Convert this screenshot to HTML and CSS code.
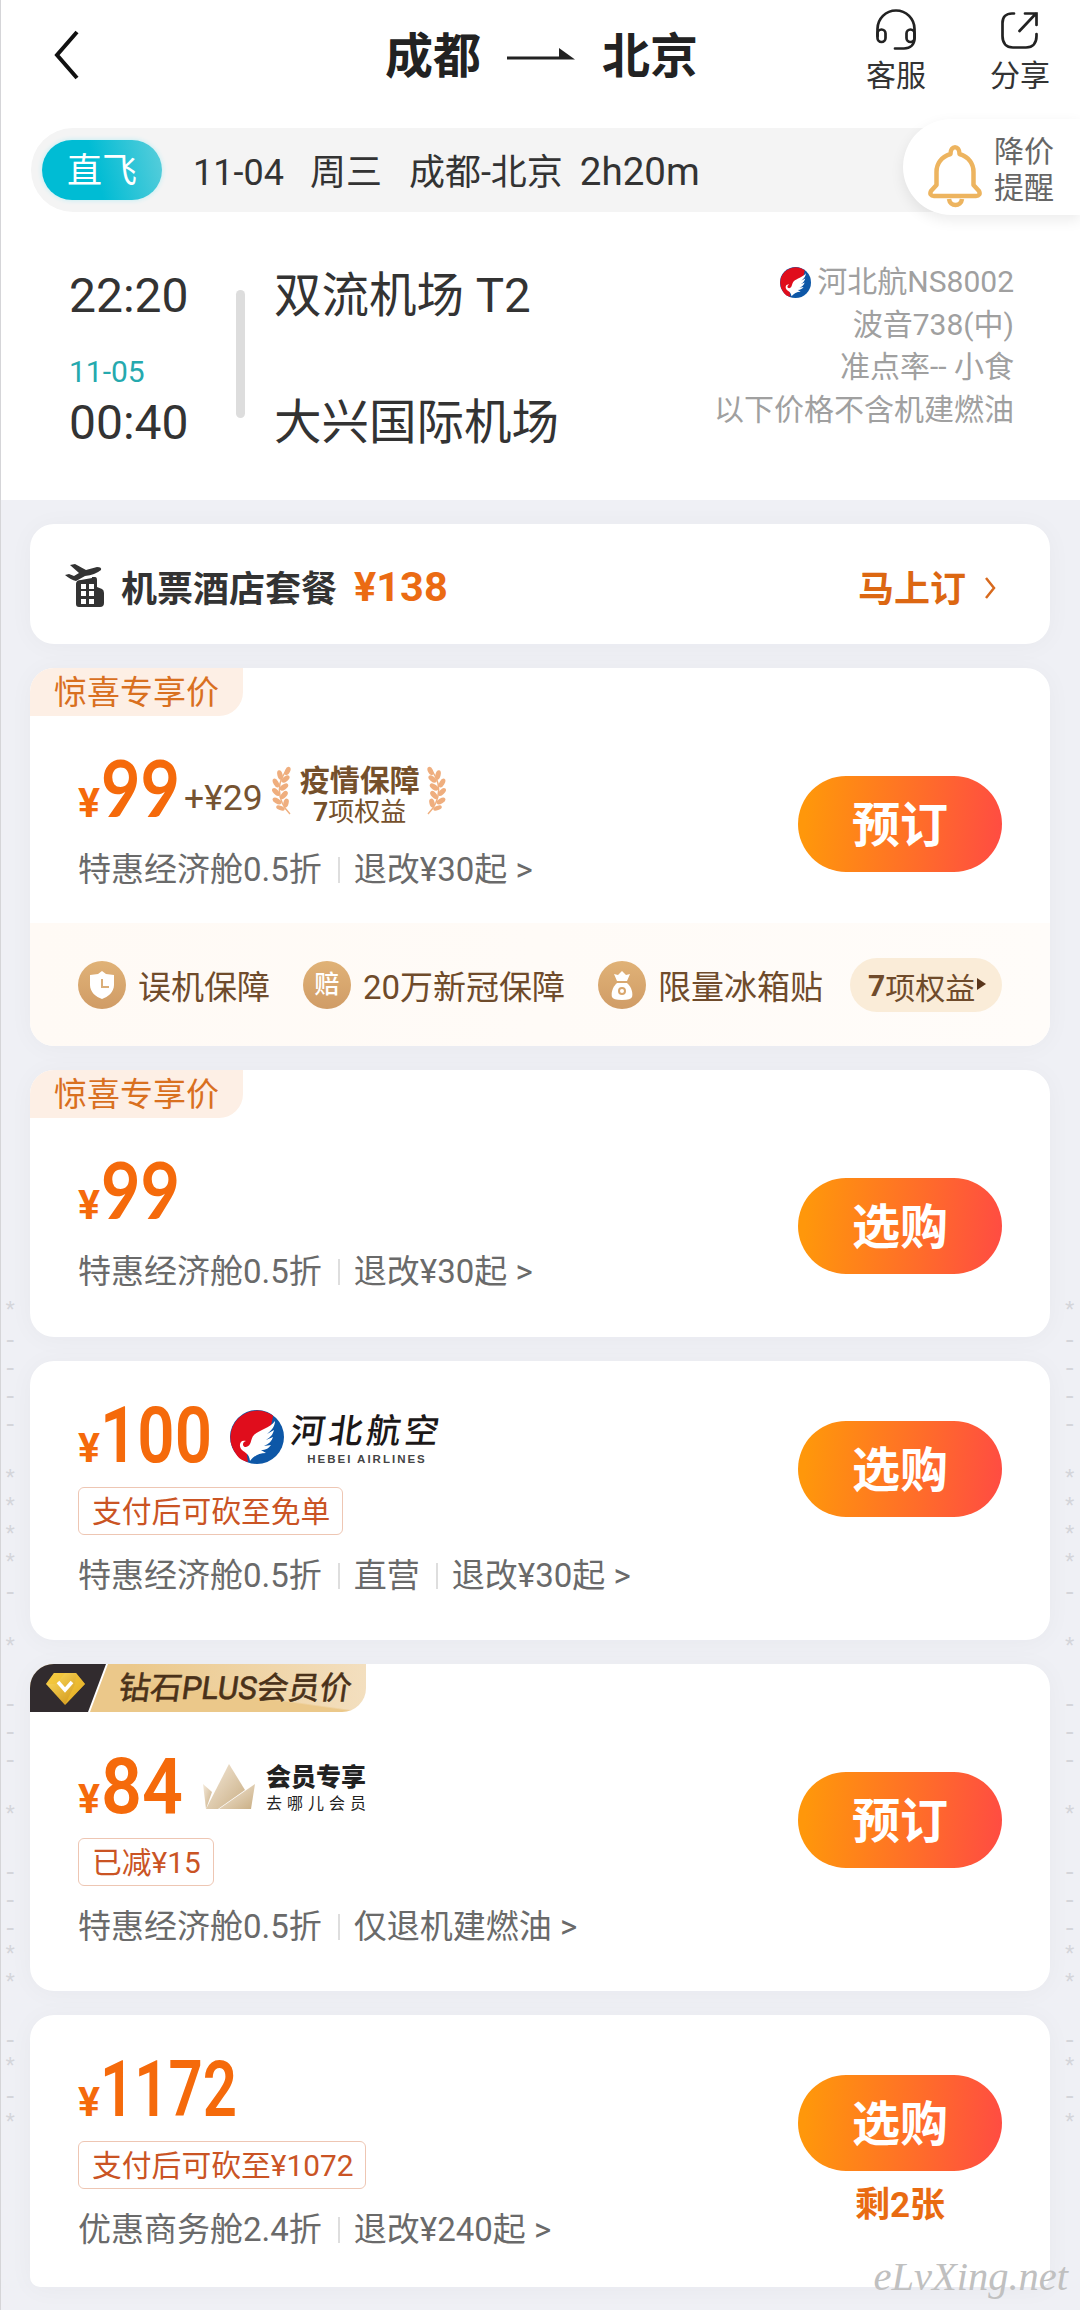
FILE: index.html
```html
<!DOCTYPE html>
<html lang="zh-CN">
<head>
<meta charset="utf-8">
<title>成都 - 北京</title>
<link rel="stylesheet" href="styles.css">
</head>
<body>
<svg width="0" height="0" class="defs">
  <defs>
    <linearGradient id="gold" x1="0" y1="0" x2="0" y2="1"><stop offset="0" stop-color="#e0b277"/><stop offset="1" stop-color="#d09c66"/></linearGradient>
    <linearGradient id="crown" x1="0" y1="0" x2="1" y2="1"><stop offset="0" stop-color="#f5eadb"/><stop offset="1" stop-color="#c9ae84"/></linearGradient>
    <linearGradient id="gem" x1="0" y1="0" x2="1" y2="1"><stop offset="0" stop-color="#ffe061"/><stop offset="1" stop-color="#c98a10"/></linearGradient>
    <symbol id="hebei" viewBox="0 0 54 54">
      <circle cx="27" cy="27" r="27" fill="#0d57a7"/>
      <path d="M43 5.500A27 27 0 0 0 6 44C9 49 13 51 18 52C17 47 16 43 19 38C22 34 27 33 31 29C38 23 42 16 43 5.500Z" fill="#e00d1c"/>
      <path d="M45 11C40 18 29 20 24 25C20 29 22 36 16 37C12 37 12 32 16 31C10 29 8 36 12 40C15 43 19 43 20 51C24 46 29 43 36 43L31 40C36 40 39 38 41 35L34 36C39 34 42 31 43 27L36 30C41 27 43 24 44 20L37 24C42 20 45 16 45 11Z" fill="#fff"/>
    </symbol>
    <symbol id="laurel" viewBox="0 0 20 50">
      <path d="M17 2C4 14 4 34 18 48" fill="none" stroke="#efb080" stroke-width="1.500"/>
      <g fill="#efae7e">
        <ellipse cx="15.500" cy="5" rx="2.600" ry="4.500" transform="rotate(25 15.500 5)"/>
        <ellipse cx="8" cy="9" rx="2.600" ry="4.800" transform="rotate(-15 8 9)"/>
        <ellipse cx="13.500" cy="13" rx="2.600" ry="4.800" transform="rotate(50 13.500 13)"/>
        <ellipse cx="4" cy="17" rx="2.600" ry="4.800" transform="rotate(-30 4 17)"/>
        <ellipse cx="12" cy="21" rx="2.600" ry="4.800" transform="rotate(55 12 21)"/>
        <ellipse cx="4" cy="26" rx="2.600" ry="4.800" transform="rotate(-45 4 26)"/>
        <ellipse cx="12" cy="29" rx="2.600" ry="4.800" transform="rotate(42 12 29)"/>
        <ellipse cx="5" cy="35" rx="2.600" ry="4.800" transform="rotate(-60 5 35)"/>
        <ellipse cx="14" cy="37" rx="2.600" ry="4.500" transform="rotate(15 14 37)"/>
        <ellipse cx="8.500" cy="42" rx="2.200" ry="4.500" transform="rotate(-70 8.500 42)"/>
      </g>
    </symbol>
  </defs>
</svg>

<main class="screen">
  <section class="top">
    <header class="nav">
      <svg class="back" viewBox="0 0 26 50"><path d="M24 2L4 25L24 48" fill="none" stroke="#111" stroke-width="4"/></svg>
      <h1 class="route"><span>成都</span><svg width="68" height="14" viewBox="0 0 68 14"><path d="M0 9.500H52V1L68 12.500H0Z" fill="#222"/></svg><span>北京</span></h1>
      <div class="actions">
        <div class="action"><svg width="42" height="42" viewBox="0 0 42 42" fill="none" stroke="#222" stroke-width="2.700" stroke-linecap="round"><path d="M2.500 27V20A18.500 18.500 0 0 1 39.500 20V29C39.500 36 35 39.500 29 39.500H20"/><rect x="2.500" y="20.500" width="8" height="12.500" rx="4"/><rect x="31.500" y="20.500" width="8" height="12.500" rx="4"/></svg><span>客服</span></div>
        <div class="action"><svg width="42" height="42" viewBox="0 0 42 42" fill="none" stroke="#222" stroke-width="2.700" stroke-linecap="round"><path d="M15 4.500H13C7 4.500 3.500 8 3.500 14V27C3.500 34 7 38.500 14 38.500H27C34 38.500 37.500 34 37.500 27V25M20.500 22L37 4.500M26 4.500H37.500V16"/></svg><span>分享</span></div>
      </div>
    </header>

    <div class="summary">
      <span class="direct">直飞</span>
      <div class="trip"><span class="s-date">11-04</span><span class="s-day">周三</span><span class="s-route">成都-北京</span><span class="s-time">2h20m</span></div>
      <div class="alert">
        <svg width="54" height="64" viewBox="0 0 54 64" fill="none" stroke="#edb45f" stroke-width="4.500" stroke-linejoin="round"><path d="M22.500 10C22.500 1 31.500 1 31.500 10C41 13 45.500 20 45.500 28V41L51 47C52.500 50 51 52 48 52H6C3 52 1.500 50 3 47L8.500 41V28C8.500 20 13 13 22.500 10Z"/><path d="M21 55C22 63 33 63 34 55"/></svg>
        <span>降价<br>提醒</span>
      </div>
    </div>

    <div class="flight">
      <div class="times"><b>22:20</b><i>11-05</i><b>00:40</b></div>
      <div class="bar"></div>
      <div class="ports"><span>双流机场 T2</span><span>大兴国际机场</span></div>
      <div class="info">
        <span class="carrier"><svg width="31" height="31"><use href="#hebei"/></svg>河北航NS8002</span>
        <span>波音738(中)</span><span>准点率-- 小食</span><span>以下价格不含机建燃油</span>
      </div>
    </div>
  </section>

  <section class="list">
    <div class="marks left">*<br>-<br>-<br>-<br>-<br><br>*<br>*<br>*<br>*<br>-<br><br>*<br><br>-<br>-<br>-<br><br>*<br><br>-<br>-<br>-<br>*<br>*<br><br>-<br>*<br>-<br>*</div>
    <div class="marks right">*<br>-<br>-<br>-<br>-<br><br>*<br>*<br>*<br>*<br>-<br><br>*<br><br>-<br>-<br>-<br><br>*<br><br>-<br>-<br>-<br>*<br>*<br><br>-<br>*<br>-<br>*</div>

    <article class="card combo">
      <svg width="40" height="43" viewBox="0 0 40 43"><g fill="#333"><path d="M5 1L10 0L21 6L32 3Q37 3 36 6Q30 11 20 12L11 17Q6 16 0 11L4 10L9 12L14 9Z"/><path d="M16 16L27 14V13H30Q32 13 32 16V23L37 25Q39 26 39 29V39Q39 43 35 43H14Q11 43 11 40V20Q11 16 16 16Z"/></g><g fill="#fff"><path d="M16 20h5v5h-5zM24 20h5v5h-5zM16 27h5v5h-5zM24 27h5v5h-5zM16 35h5v5h-5zM24 35h5v5h-5z"/></g></svg>
      <span class="combo-name">机票酒店套餐</span><span class="combo-price">¥138</span>
      <span class="combo-go">马上订</span>
      <svg class="combo-arrow" width="12" height="22" viewBox="0 0 12 22"><path d="M2 1L10 11L2 21" fill="none" stroke="#d86a1e" stroke-width="2.500"/></svg>
    </article>

    <article class="card c2">
      <div class="tag">惊喜专享价</div>
      <div class="fare">
        <div class="detail">
          <div class="price"><svg class="amount" width="104" height="68"><text class="yen" x="0" y="61" textLength="22" lengthAdjust="spacingAndGlyphs">¥</text><text class="num lato" x="23" y="61" textLength="79" lengthAdjust="spacingAndGlyphs">99</text></svg>
            <span class="plus">+¥29</span>
            <svg class="laurel" width="20" height="50"><use href="#laurel"/></svg>
            <span class="perk"><b>疫情保障</b><span><b>7</b>项权益</span></span>
            <svg class="laurel flip" width="20" height="50"><use href="#laurel"/></svg>
          </div>
          <div class="terms"><span>特惠经济舱0.5折</span><span>退改¥30起 &gt;</span></div>
        </div>
        <div class="buy"><button>预订</button></div>
      </div>
      <div class="benefits">
        <span class="benefit"><svg width="48" height="48" viewBox="0 0 48 48"><circle cx="24" cy="24" r="24" fill="url(#gold)"/><path d="M24 10L28 13L36 14V24C36 31 30 36 24 38C18 36 12 31 12 24V14L20 13Z" fill="#fff"/><path d="M24 18V26H31" fill="none" stroke="#dbae78" stroke-width="2"/></svg>误机保障</span>
        <span class="benefit"><span class="coin">赔</span>20万新冠保障</span>
        <span class="benefit"><svg width="48" height="48" viewBox="0 0 48 48"><circle cx="24" cy="24" r="24" fill="url(#gold)"/><path d="M16 13L20 14L24 10L28 14L32 13L29 20H19Z" fill="#fff"/><path d="M19 22H29C34 26 35 33 34 36Q33 39 24 39Q15 39 14 36C13 33 14 26 19 22Z" fill="#fff"/><circle cx="24" cy="30" r="3" fill="none" stroke="#d8a66d" stroke-width="2"/></svg>限量冰箱贴</span>
        <span class="more"><b>7</b>项权益<i></i></span>
      </div>
    </article>

    <article class="card c3">
      <div class="tag">惊喜专享价</div>
      <div class="fare">
        <div class="detail">
          <div class="price"><svg class="amount" width="104" height="68"><text class="yen" x="0" y="61" textLength="22" lengthAdjust="spacingAndGlyphs">¥</text><text class="num lato" x="23" y="61" textLength="79" lengthAdjust="spacingAndGlyphs">99</text></svg></div>
          <div class="terms"><span>特惠经济舱0.5折</span><span>退改¥30起 &gt;</span></div>
        </div>
        <div class="buy"><button>选购</button></div>
      </div>
    </article>

    <article class="card c4">
      <div class="fare">
        <div class="detail">
          <div class="price"><svg class="amount" width="134" height="68"><text class="yen" x="0" y="61" textLength="22" lengthAdjust="spacingAndGlyphs">¥</text><text class="num" x="22" y="61" textLength="112" lengthAdjust="spacingAndGlyphs">100</text></svg>
            <svg class="airline" width="54" height="54"><use href="#hebei"/></svg>
            <span class="brand"><span class="brand-cn">河北航空</span><span class="brand-en">HEBEI AIRLINES</span></span>
          </div>
          <div class="promo">支付后可砍至免单</div>
          <div class="terms"><span>特惠经济舱0.5折</span><span>直营</span><span>退改¥30起 &gt;</span></div>
        </div>
        <div class="buy"><button>选购</button></div>
      </div>
    </article>

    <article class="card c5">
      <div class="plus-tag">
        <svg width="70" height="48" viewBox="0 0 70 48"><path d="M0 0H76L58 48H0Z" fill="#312b2e"/><path d="M24 9H46L55 20L35 41L16 20Z" fill="url(#gem)"/><path d="M24 9L16 20H26L35 9ZM46 9L55 20L35 41L45 20Z" fill="#f2c230" opacity=".6"/><path d="M28 18L35 26L42 18" fill="none" stroke="#fff" stroke-width="3.500"/></svg>
        <span>钻石PLUS会员价</span>
      </div>
      <div class="fare">
        <div class="detail">
          <div class="price"><svg class="amount" width="109" height="68"><text class="yen" x="0" y="61" textLength="22" lengthAdjust="spacingAndGlyphs">¥</text><text class="num" x="23" y="61" textLength="82" lengthAdjust="spacingAndGlyphs">84</text></svg>
            <svg class="crown" width="52" height="46" viewBox="0 0 52 46"><g fill="url(#crown)"><path d="M0 20L9 28L3 45Z"/><path d="M26 0L42 26L15 45H3Z"/><path d="M52 20L48 45H16Z"/></g></svg>
            <span class="member"><b>会员专享</b><span>去哪儿会员</span></span>
          </div>
          <div class="promo">已减¥15</div>
          <div class="terms"><span>特惠经济舱0.5折</span><span>仅退机建燃油 &gt;</span></div>
        </div>
        <div class="buy"><button>预订</button></div>
      </div>
    </article>

    <article class="card c6">
      <div class="fare">
        <div class="detail">
          <div class="price"><svg class="amount" width="162" height="68"><text class="yen" x="0" y="61" textLength="22" lengthAdjust="spacingAndGlyphs">¥</text><text class="num" x="22" y="61" textLength="137" lengthAdjust="spacingAndGlyphs">1172</text></svg></div>
          <div class="promo">支付后可砍至¥1072</div>
          <div class="terms"><span>优惠商务舱2.4折</span><span>退改¥240起 &gt;</span></div>
        </div>
        <div class="buy"><button>选购</button><span class="left-count">剩2张</span></div>
      </div>
    </article>
    <div class="watermark">eLvXing.net</div>
  </section>
</main>
</body>
</html>
```

FILE: styles.css
```css
* { box-sizing: border-box; }
body { margin: 0; background: #eff0f5; color: #333; font-family: Roboto, "Noto Sans CJK SC", sans-serif; }
svg { flex: none; display: block; }
.defs { position: absolute; }
.screen { width: 1080px; height: 2310px; overflow: hidden; border-left: 1px solid #d5d5d8; white-space: nowrap; }
.top { height: 500px; background: #fff; }

.nav { height: 128px; display: flex; align-items: flex-start; padding-left: 52px; }
.back { width: 26px; height: 50px; margin-top: 30px; }
.route { margin: 24px 0 0 306px; height: 66px; line-height: 66px; display: flex; align-items: center; font-size: 48px; font-weight: 700; color: #222; }
.route svg { margin: -6px 27px 0 26px; }
.actions { margin-left: auto; display: flex; gap: 64px; padding: 9px 30px 0 0; }
.action { width: 60px; display: flex; flex-direction: column; align-items: center; font-size: 30px; line-height: 40px; color: #333; }
.action span { margin-top: 5px; }

.summary { height: 84px; margin-left: 30px; padding-left: 11px; display: flex; align-items: center; position: relative; background: #f4f4f4; border-radius: 42px 0 0 42px; font-size: 36px; }
.direct { width: 120px; height: 60px; line-height: 63px; border-radius: 30px; background: linear-gradient(75deg, #00bcd4 45%, #5bcedb); color: #fff; text-align: center; font-size: 35px; margin-right: 31px; box-shadow: 0 0 5px #b8edf4; }
.trip { display: flex; align-items: baseline; line-height: 50px; padding-top: 5px; }
.s-date { margin-right: 26px; }
.s-day { margin-right: 27px; }
.s-route { margin-right: 17px; }
.s-time { font-size: 38.500px; }
.alert { position: absolute; right: 0; top: -9px; width: 177px; height: 96px; padding-left: 25px; display: flex; align-items: center; gap: 12px; background: #fff; border-radius: 48px 0 0 48px; box-shadow: 0 5px 14px rgba(0,0,0,.08); color: #666; font-size: 30px; line-height: 36px; }
.alert svg { margin-top: 18px; }
.alert span { margin-top: 6px; }

.flight { display: flex; padding: 51px 66px 0 68px; }
.times { width: 167px; display: flex; flex-direction: column; }
.times b { font-weight: 400; font-size: 48px; line-height: 66px; }
.times i { font-style: normal; font-size: 30px; line-height: 40px; color: #25a9ae; margin: 23px 0 -2px; }
.bar { width: 9px; height: 128px; margin-top: 27px; border-radius: 5px; background: #ddd; }
.ports { margin-left: 29px; font-size: 47.500px; line-height: 66px; display: flex; flex-direction: column; gap: 61px; }
.info { margin-left: auto; margin-top: -2px; display: flex; flex-direction: column; align-items: flex-end; color: #a0a0a0; font-size: 30px; line-height: 42.500px; }
.carrier { display: flex; align-items: center; gap: 6px; }

.list { position: relative; padding: 24px 30px 0 29px; display: flex; flex-direction: column; gap: 24px; }
.marks { position: absolute; top: 799px; font: 24px/28px "Liberation Mono", monospace; color: #d4d5da; }
.marks.left { left: 2px; }
.marks.right { right: 3px; }
.card { position: relative; background: #fff; border-radius: 24px; box-shadow: 0 2px 26px rgba(40,40,60,.035); overflow: hidden; }
.combo { height: 120px; display: flex; align-items: center; padding: 3px 54px 0 35px; }
.combo-name { margin-left: 16px; font-size: 36px; font-weight: 700; }
.combo-price { margin: 1px 0 0 17px; font-size: 41.500px; font-weight: 700; color: #eb6b13; }
.combo-go { margin: 0 18px 0 auto; font-size: 36px; font-weight: 700; color: #dc6712; }
.combo-arrow { margin-top: 5px; }
.c2 { height: 378px; }
.c3 { height: 267px; }
.c4 { height: 279px; }
.c5 { height: 327px; }
.c6 { height: 272px; border-radius: 24px 24px 10px 10px; }

.tag { width: 213px; height: 48px; line-height: 50px; padding-left: 24px; font-size: 33px; color: #d9701f; background: #fdefe5; border-radius: 0 0 24px 0; }
.fare { display: flex; justify-content: space-between; padding: 40px 48px 0 48px; }
.c2 .fare { height: 207px; }
.price { height: 68px; display: flex; align-items: flex-start; }
.amount { overflow: visible; fill: #f56a0b; font-weight: 700; }
.yen { font-size: 41px; }
.num { font-size: 78px; font-weight: 600; }
.num.lato { font-family: Lato, Roboto, sans-serif; font-weight: 700; }
.plus { margin: 14px 9px 0 2px; font-size: 35.500px; line-height: 56px; color: #765331; }
.laurel { margin-top: 10px; }
.flip { transform: scaleX(-1); }
.perk { margin: 7px 6px 0 8px; width: 120px; display: flex; flex-direction: column; align-items: center; color: #75502b; font-size: 26px; line-height: 26px; }
.perk > b { font-size: 30px; line-height: 36px; }
.terms { height: 40px; margin-top: 26px; line-height: 42px; font-size: 33px; color: #6a6a6a; display: flex; align-items: center; }
.terms span + span::before { content: ""; display: inline-block; width: 2px; height: 26px; background: #dedede; margin: 0 14px 0 16px; vertical-align: -2px; }
.promo { width: max-content; height: 48px; margin-top: 18px; padding: 0 12px 0 13px; line-height: 48px; border: 1px solid #eec6b3; border-radius: 6px; font-size: 29.800px; color: #ca5424; }
.promo + .terms { margin-top: 21px; }
.buy { width: 204px; padding-top: 20px; display: flex; flex-direction: column; align-items: center; }
.buy button { width: 204px; height: 96px; padding: 4px 0 0; border: 0; border-radius: 48px; background: linear-gradient(95deg, #ff970b 5%, #ff6c2a 60%, #ff4b43); color: #fff; font: 700 48px/90px Roboto, "Noto Sans CJK SC", sans-serif; }
.left-count { margin-top: 14px; font-size: 35px; line-height: 42px; font-weight: 700; color: #e96b11; }

.benefits { height: 123px; padding: 0 48px; display: flex; align-items: center; background: linear-gradient(90deg, #fffaf5, #fffcf9); color: #6f4b2b; font-size: 33px; }
.benefit { display: flex; align-items: center; margin-right: 33px; }
.benefit > svg, .coin { margin-right: 12px; }
.coin { width: 48px; height: 48px; border-radius: 24px; background: linear-gradient(#e0b277, #d09c66); color: #fff; font-size: 25px; line-height: 47px; font-weight: 500; text-align: center; }
.more { margin-left: auto; width: 152px; height: 54px; padding: 2px 0 0 18px; border-radius: 27px; background: #faecd8; font-size: 30px; display: flex; align-items: center; }
.benefit:nth-child(3) { margin-right: 0; }
.more i { border: 6px solid transparent; border-left: 9px solid #59351b; border-right: 0; margin: -3px 0 0 2px; }

.airline { margin: 9px 0 0 18px; }
.brand { margin: 10px 0 0 8px; width: 150px; display: flex; flex-direction: column; align-items: center; color: #1c1818; }
.brand-cn { font-size: 34px; line-height: 40px; letter-spacing: 4px; font-weight: 500; transform: skewX(-8deg); }
.brand-en { margin-top: 1px; font: 700 11.500px/14px "Liberation Sans", sans-serif; letter-spacing: 2px; color: #444; }

.plus-tag { width: 336px; height: 48px; display: flex; border-radius: 0 0 24px 0; background: linear-gradient(188deg, transparent 50%, #ebc88a 52%), linear-gradient(90deg, #ebc88a 30%, #f3dfbf); color: #4a3119; font-size: 31.500px; line-height: 49px; font-weight: 400; -webkit-text-stroke: .6px #4a3119; overflow: hidden; }
.plus-tag svg { overflow: visible; filter: drop-shadow(2px 0 0 #fff); }
.plus-tag span { margin-left: 19px; transform: skewX(-8deg); }
.crown { margin: 12px 0 0 16px; }
.member { margin: 10px 0 0 11px; display: flex; flex-direction: column; color: #222; }
.member b { font-size: 25px; line-height: 32px; font-weight: 900; }
.member span { font-size: 16px; line-height: 20px; letter-spacing: 5px; }
.watermark { position: absolute; right: 12px; top: 1749px; font: italic 40.500px/56px "Liberation Serif", serif; color: #c0c0c0; }
```
